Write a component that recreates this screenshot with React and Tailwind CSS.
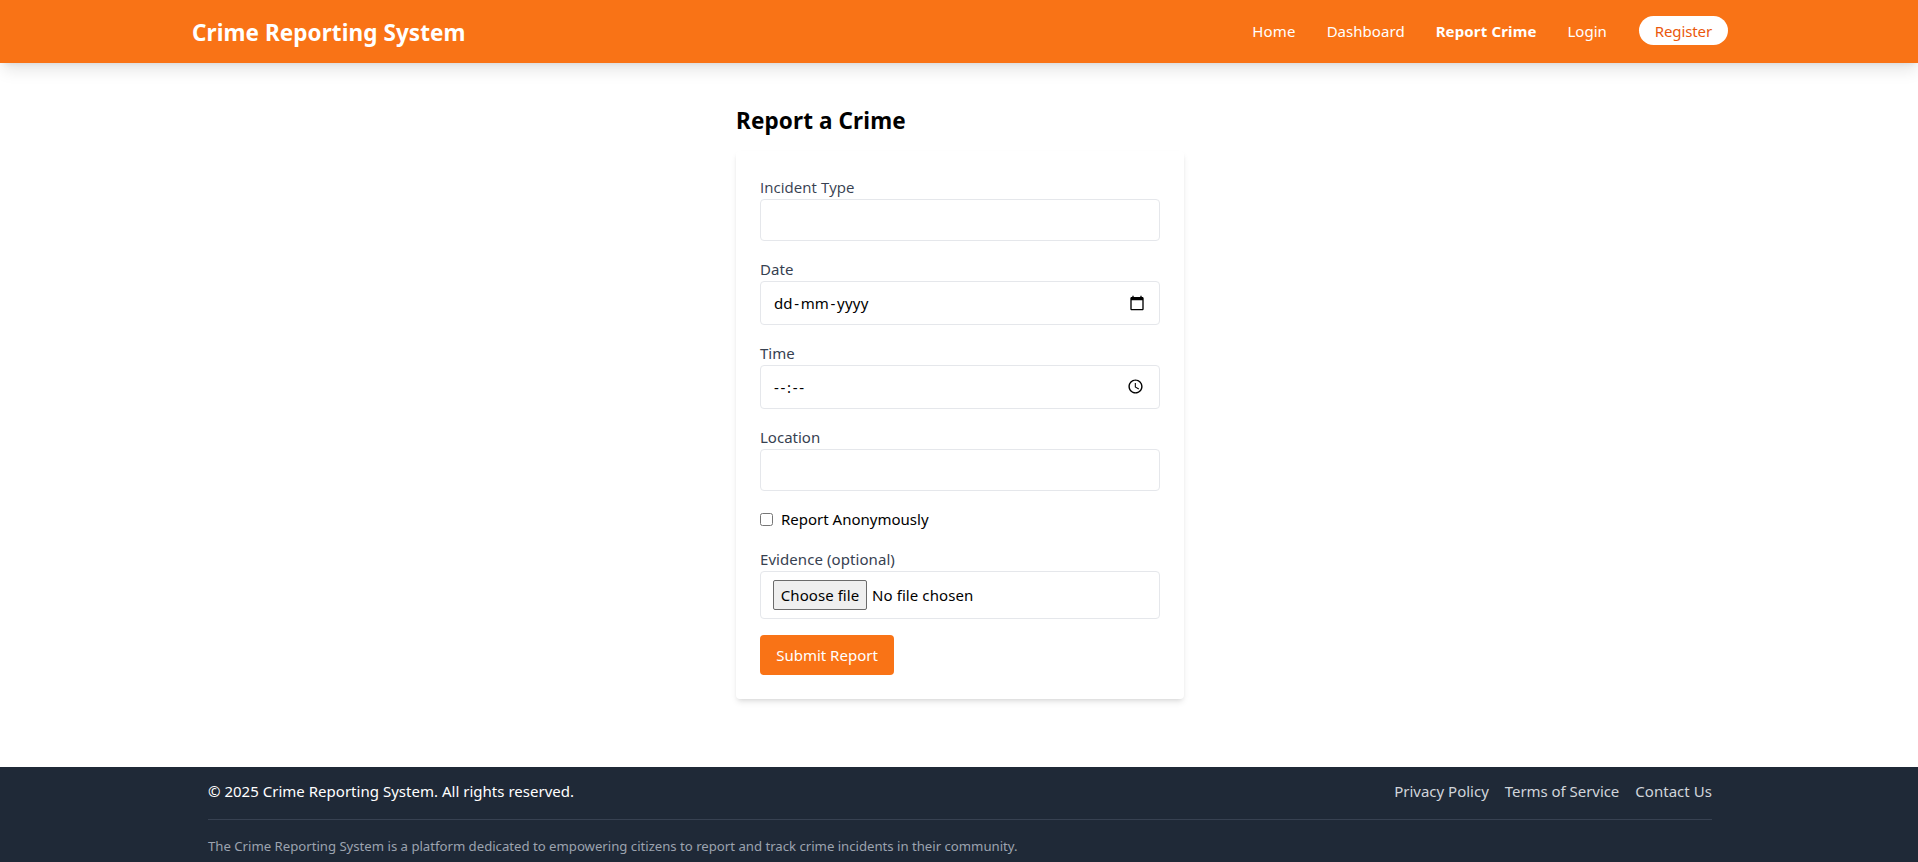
function Label({ children }) {
  return <span className="block h-6 leading-6 text-[#374151]">{children}</span>;
}

function CalendarIcon() {
  return (
    <svg className="h-4 w-4" viewBox="0 0 24 24" fill="#000">
      <path d="M20 3h-1V1h-2v2H7V1H5v2H4c-1.100 0-2 .9-2 2v16c0 1.100.9 2 2 2h16c1.100 0 2-.9 2-2V5c0-1.100-.9-2-2-2zm0 18H4V8h16v13z" />
    </svg>
  );
}

function ClockIcon() {
  return (
    <svg className="mb-px h-[17px] w-[17px]" viewBox="0 0 24 24" fill="#000">
      <path d="M11.990 2C6.470 2 2 6.480 2 12s4.470 10 9.990 10C17.520 22 22 17.520 22 12S17.520 2 11.990 2zM12 20c-4.420 0-8-3.580-8-8s3.580-8 8-8 8 3.580 8 8-3.580 8-8 8zm.5-13H11v6l5.250 3.150.75-1.230-4.500-2.670z" />
    </svg>
  );
}

export default function App() {
  return (
    <div className="h-[862px] w-full overflow-hidden bg-white font-['Noto_Sans',sans-serif] text-[15px] leading-6 text-black">
      <div className="flex w-[1920px] flex-col">
        <header className="flex h-[63px] justify-center bg-[#f97316] text-white shadow-[0_10px_15px_-3px_rgba(0,0,0,0.1),0_4px_6px_-4px_rgba(0,0,0,0.1)]">
          <div className="flex w-[1536px] items-start justify-between pt-[15px]">
            <h1 className="pt-0.5 text-[22.500px] leading-8 font-bold tracking-[0.08px]">Crime Reporting System</h1>
            <nav className="flex gap-[31px] pt-1">
              <a className="tracking-[0.2px]">Home</a>
              <a className="tracking-[0.04px]">Dashboard</a>
              <a className="font-bold tracking-[0.14px]">Report Crime</a>
              <a className="pr-px">Login</a>
              <a className="-mt-[3px] flex h-[29px] items-center rounded-full bg-white px-4 text-[#ea580c] tracking-[-0.12px]">Register</a>
            </nav>
          </div>
        </header>

        <main className="flex h-[704px] justify-center pt-10">
          <div className="w-[448px]">
            <h2 className="mb-3.5 pt-0.5 text-[22.500px] leading-8 font-bold tracking-[0.12px]">Report a Crime</h2>
            <form className="flex flex-col gap-4 rounded bg-white p-6 shadow-[0_4px_6px_-1px_rgba(0,0,0,0.1),0_2px_4px_-2px_rgba(0,0,0,0.1)]">
              <div className="font-['Open_Sans',sans-serif]">
                <span className="block h-6 leading-6 tracking-[0.06px] text-[#374151]">Incident Type</span>
                <input type="text" className="block h-[42px] w-full rounded border border-[#e5e7eb] px-3" />
              </div>
              <div>
                <Label><span className="tracking-[0.1px]">Date</span></Label>
                <div className="flex h-11 items-center justify-between rounded border border-[#e5e7eb] pr-[14px] pl-[13px]">
                  <span className="flex">
                    dd<span className="px-[1.700px]">-</span>mm<span className="px-[1.700px]">-</span><span className="tracking-[0.3px]">yyyy</span>
                  </span>
                  <CalendarIcon />
                </div>
              </div>
              <div>
                <Label>Time</Label>
                <div className="flex h-11 items-center justify-between rounded border border-[#e5e7eb] pr-[15px] pl-[13px]">
                  <span className="tracking-[1.700px]">--:--</span>
                  <ClockIcon />
                </div>
              </div>
              <div>
                <Label>Location</Label>
                <input type="text" className="block h-[42px] w-full rounded border border-[#e5e7eb] px-3" />
              </div>
              <label className="flex items-center gap-2">
                <input type="checkbox" className="h-[13px] w-[13px]" />
                <span>Report Anonymously</span>
              </label>
              <div>
                <Label><span className="tracking-[0.07px]">Evidence (optional)</span></Label>
                <div className="flex h-12 items-center rounded border border-[#e5e7eb] pl-3">
                  <button type="button" className="flex h-[30px] w-[94px] items-center justify-center rounded-[2px] border border-[#6b6b6b] bg-[#efefef] tracking-[0.06px]">Choose file</button>
                  <span className="ml-[5px] tracking-[0.09px]">No file chosen</span>
                </div>
              </div>
              <button type="button" className="h-10 w-[134px] rounded bg-[#f97316] text-white">Submit Report</button>
            </form>
          </div>
        </main>

        <footer className="flex h-[112px] justify-center bg-[#1f2937] text-white">
          <div className="w-[1504px] pt-3">
            <div className="flex justify-between">
              <p className="tracking-[0.017px]">© 2025 Crime Reporting System. All rights reserved.</p>
              <nav className="flex gap-4 text-[#d1d5db]">
                <a>Privacy Policy</a>
                <a className="tracking-[-0.05px]">Terms of Service</a>
                <a className="tracking-[0.04px]">Contact Us</a>
              </nav>
            </div>
            <p className="mt-4 border-t border-[#374151] pt-4 text-[13.200px] leading-5 tracking-[-0.018px] text-[#9ca3af]">
              The Crime Reporting System is a platform dedicated to empowering citizens to report and track crime incidents in their community.
            </p>
          </div>
        </footer>
      </div>
    </div>
  );
}
